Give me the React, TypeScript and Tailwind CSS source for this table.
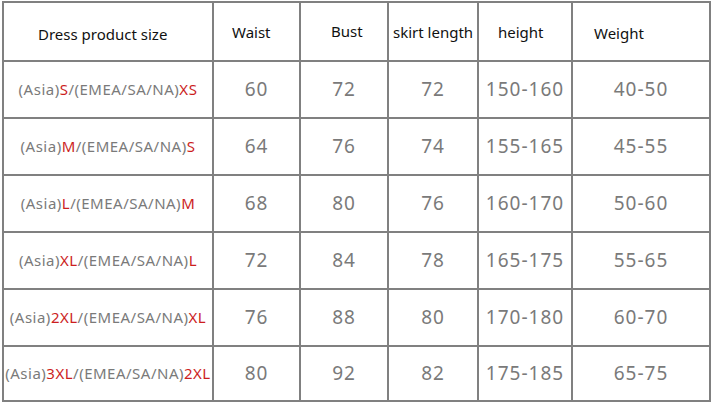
const HEADERS = [
  { label: "Dress product size", cls: "pl-[34px] pt-[6px]" },
  { label: "Waist", cls: "pl-[18px] pt-[2px]" },
  { label: "Bust", cls: "pl-[30px]" },
  { label: "skirt length", cls: "pl-[4px] pt-[1px]" },
  { label: "height", cls: "pl-[19px] pt-[1px]" },
  { label: "Weight", cls: "pl-[21px] pt-[3px]" },
];

const ROWS = [
  { asia: "S", emea: "XS", vals: ["60", "72", "72", "150-160", "40-50"] },
  { asia: "M", emea: "S", vals: ["64", "76", "74", "155-165", "45-55"] },
  { asia: "L", emea: "M", vals: ["68", "80", "76", "160-170", "50-60"] },
  { asia: "XL", emea: "L", vals: ["72", "84", "78", "165-175", "55-65"] },
  { asia: "2XL", emea: "XL", vals: ["76", "88", "80", "170-180", "60-70"] },
  { asia: "3XL", emea: "2XL", vals: ["80", "92", "82", "175-185", "65-75"] },
];

const ROW_H = ["h-[55px]", "h-[55px]", "h-[55px]", "h-[55px]", "h-[55px]", "h-[53px]"];

export default function App() {
  return (
    <div className="w-[713px] h-[403px] bg-white overflow-hidden">
      <div
        className="ml-[2px] mt-[1px] w-[709px] grid grid-cols-[208px_85px_86px_88px_92px_136px] gap-[2px] p-[2px] bg-[#808080]"
        style={{ fontFamily: '"Noto Sans", "Open Sans", sans-serif' }}
      >
        {HEADERS.map((h) => (
          <div
            key={h.label}
            className={`h-[57px] bg-white flex items-center text-[15px] text-[#111] whitespace-nowrap ${h.cls}`}
          >
            {h.label}
          </div>
        ))}

        {ROWS.map((r, i) => (
          <Row key={r.asia} {...r} h={ROW_H[i]} />
        ))}
      </div>
    </div>
  );
}

function Row({ asia, emea, vals, h }: { asia: string; emea: string; vals: string[]; h: string }) {
  return (
    <>
      <div className={`${h} bg-white flex items-center justify-center text-[15px] tracking-[0.5px] text-[#7a7a7a] whitespace-nowrap`}>
        (Asia)<span className="text-[#cc1e1e]">{asia}</span>/(EMEA/SA/NA)
        <span className="text-[#cc1e1e]">{emea}</span>
      </div>
      {vals.map((v, j) => (
        <div
          key={j}
          className={`${h} bg-white flex items-center justify-center text-[19px] tracking-[1px] text-[#7a7a7a]`}
        >
          {v}
        </div>
      ))}
    </>
  );
}
